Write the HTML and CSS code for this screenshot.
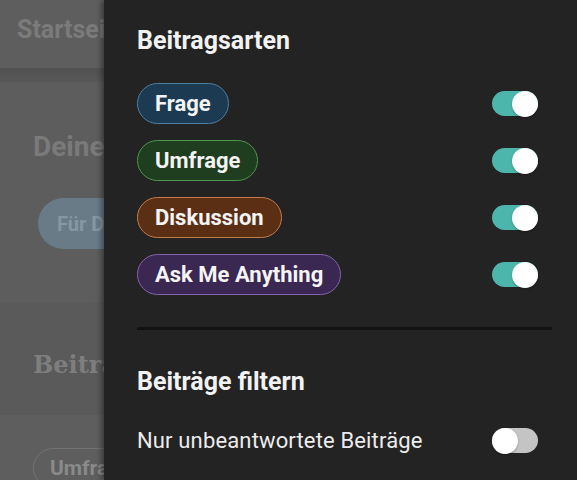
FILE: index.html
```html
<!DOCTYPE html>
<html lang="de">
<head>
<meta charset="utf-8">
<link rel="stylesheet" href="styles.css">
</head>
<body>
<div class="page">
  <div class="bg">
    <header class="bg-header"><span class="clip">Startseite</span></header>
    <div class="bg-shadow"></div>
    <section class="bg-intro">
      <h1 class="bg-title clip">Deine Community</h1>
      <div class="bg-tabs"><span class="bg-tab">Für Dich</span></div>
    </section>
    <section class="bg-posts">
      <h2 class="bg-subtitle clip">Beiträge</h2>
    </section>
    <section class="bg-list">
      <span class="bg-chip">Umfrage</span>
    </section>
  </div>

  <aside class="drawer">
    <h2 class="drawer-title">Beitragsarten</h2>
    <ul class="type-list">
      <li class="row">
        <span class="chip chip-frage">Frage</span>
        <span class="switch on"><span class="thumb"></span></span>
      </li>
      <li class="row">
        <span class="chip chip-umfrage">Umfrage</span>
        <span class="switch on"><span class="thumb"></span></span>
      </li>
      <li class="row">
        <span class="chip chip-diskussion">Diskussion</span>
        <span class="switch on"><span class="thumb"></span></span>
      </li>
      <li class="row">
        <span class="chip chip-ama">Ask Me Anything</span>
        <span class="switch on"><span class="thumb"></span></span>
      </li>
    </ul>
    <hr class="divider">
    <h2 class="drawer-title filter-title">Beiträge filtern</h2>
    <div class="row filter-row">
      <span class="filter-label">Nur unbeantwortete Beiträge</span>
      <span class="switch off"><span class="thumb"></span></span>
    </div>
  </aside>
</div>
</body>
</html>
```

FILE: styles.css
```css
* { box-sizing: border-box; }
html, body { margin: 0; padding: 0; }
body {
  width: 577px;
  height: 480px;
  overflow: hidden;
  font-family: Roboto, "Noto Sans", sans-serif;
  background: #5c5c5c;
}
.page {
  position: relative;
  width: 577px;
  height: 480px;
  overflow: hidden;
}

/* dimmed page behind the drawer */
.bg {
  display: flex;
  flex-direction: column;
  width: 104px;
  height: 100%;
  overflow: hidden;
  background: #5c5c5c;
  color: #7a7a7a;
}
.clip {
  display: block;
  white-space: nowrap;
  overflow: hidden;
}
.bg-header {
  height: 68px;
  flex: none;
  background: #5e5e5e;
  padding: 15px 0 0 17px;
  font-size: 25px;
  line-height: 30px;
  font-weight: 700;
  color: #7b7b7b;
}
.bg-shadow {
  height: 14px;
  flex: none;
  background: linear-gradient(#515151, #585858);
}
.bg-intro {
  height: 221px;
  flex: none;
  background: #5d5d5d;
  padding: 48px 0 0 33px;
}
.bg-title {
  margin: 0;
  font-size: 28px;
  line-height: 34px;
  font-weight: 700;
  color: #7a7a7a;
}
.bg-tabs {
  margin-top: 34px;
  padding-left: 5px;
  white-space: nowrap;
}
.bg-tab {
  display: inline-flex;
  align-items: center;
  height: 51px;
  padding: 0 24px 0 19px;
  border-radius: 26px;
  background: #697b87;
  color: #8797a2;
  font-size: 20px;
  font-weight: 700;
  white-space: nowrap;
}
.bg-posts {
  height: 112px;
  flex: none;
  background: #5a5a5a;
  padding: 48px 0 0 33px;
}
.bg-subtitle {
  margin: 0;
  font-family: "DejaVu Serif", serif;
  font-size: 24px;
  line-height: 28px;
  font-weight: 700;
  color: #7e7e7e;
}
.bg-list {
  flex: 1;
  background: #5e5e5e;
  padding: 33px 0 0 33px;
  white-space: nowrap;
}
.bg-chip {
  display: inline-flex;
  align-items: center;
  height: 40px;
  padding: 0 16px;
  border: 1.5px solid #727272;
  border-radius: 20px;
  color: #8a8a8a;
  font-size: 21px;
  font-weight: 700;
}

/* navigation drawer overlay */
.drawer {
  position: absolute;
  top: 0;
  bottom: 0;
  left: 104px;
  right: 0;
  background: #232323;
  box-shadow: -2px 0 6px rgba(0, 0, 0, 0.45);
  padding: 25px 25px 0 33px;
  color: #f2f2f2;
}
.drawer-title {
  margin: 0;
  font-size: 25px;
  line-height: 32px;
  font-weight: 700;
  color: #f2f2f2;
}
.type-list {
  list-style: none;
  margin: 26px 0 0;
  padding: 0;
  display: flex;
  flex-direction: column;
  gap: 16px;
}
.row {
  display: flex;
  align-items: center;
  justify-content: space-between;
  padding-right: 14px;
}
.chip {
  display: inline-flex;
  align-items: center;
  height: 41px;
  padding: 0 17px;
  border: 1.5px solid;
  border-radius: 21px;
  font-size: 22px;
  font-weight: 700;
  color: #f4f4f4;
  white-space: nowrap;
}
.chip-frage { background: #1c3b53; border-color: #4e7fa2; }
.chip-umfrage { background: #1f3d1f; border-color: #4f964f; }
.chip-diskussion { background: #5a2f14; border-color: #c47c4e; }
.chip-ama { background: #3a2752; border-color: #8464ac; }

.switch {
  position: relative;
  display: inline-block;
  flex: none;
  width: 46px;
  height: 25px;
  border-radius: 13px;
}
.switch.on { background: #4db6ac; }
.switch.off { background: #c4c4c4; }
.thumb {
  position: absolute;
  top: -0.5px;
  width: 26px;
  height: 26px;
  border-radius: 50%;
  background: #ffffff;
  box-shadow: 0 1px 2px rgba(0, 0, 0, 0.3);
}
.switch.on .thumb { right: 0; }
.switch.off .thumb { left: 0; }

.divider {
  margin: 32px 0 0;
  border: 0;
  height: 3px;
  background: #121212;
}
.filter-title {
  margin-top: 36px;
}
.filter-row {
  margin-top: 30px;
}
.filter-label {
  font-size: 22px;
  letter-spacing: 0.15px;
  font-weight: 400;
  color: #ececec;
}
```
